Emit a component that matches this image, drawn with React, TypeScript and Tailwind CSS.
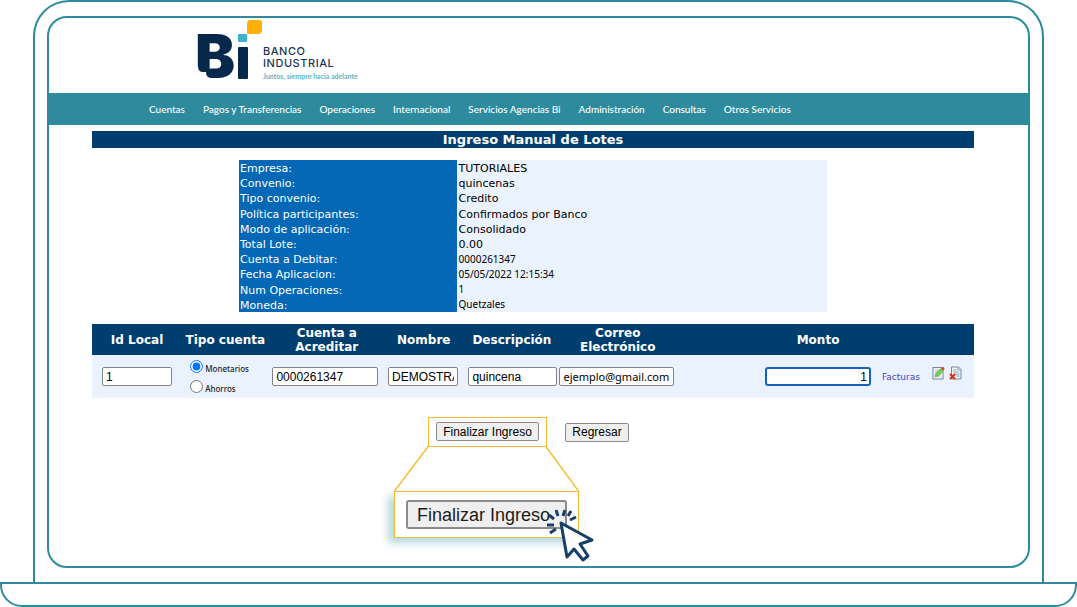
import type { ReactNode } from "react";

const navLinks = [
  "Cuentas",
  "Pagos y Transferencias",
  "Operaciones",
  "Internacional",
  "Servicios Agencias Bi",
  "Administración",
  "Consultas",
  "Otros Servicios",
];

const batchInfo = [
  { label: "Empresa:", value: "TUTORIALES" },
  { label: "Convenio:", value: "quincenas" },
  { label: "Tipo convenio:", value: "Credito" },
  { label: "Política participantes:", value: "Confirmados por Banco" },
  { label: "Modo de aplicación:", value: "Consolidado" },
  { label: "Total Lote:", value: "0.00" },
  { label: "Cuenta a Debitar:", value: "0000261347", small: true },
  { label: "Fecha Aplicacion:", value: "05/05/2022 12:15:34", small: true },
  { label: "Num Operaciones:", value: "1", small: true },
  { label: "Moneda:", value: "Quetzales", small: true },
];

const inputClass =
  "block h-[19px] w-full min-w-0 rounded-[2px] border border-[#858585] bg-white px-[3px] leading-4 text-black";

function Logo() {
  return (
    <div className="flex">
      <svg viewBox="0 0 68 73" className="h-[73px] w-[68px] shrink-0" role="img" aria-label="Bi">
        <text x="0" y="58" fill="#06294b" className="font-['Inter'] text-[60px] font-black">
          B
        </text>
        <path d="M0 46h3q0 6 5 6h3q0 6 6 6v2H0z" fill="#fff" />
        <rect x="43" y="27" width="10" height="32" rx="1" fill="#06294b" />
        <rect x="43" y="14" width="9" height="8" rx="1" fill="#3db3cb" />
        <path d="M55 0h10q2 0 2 2v8q0 4-4 4h-11V4q0-4 3-4z" fill="#fdb005" />
      </svg>
      <div className="flex flex-col pt-[25px] text-[#1b3551]">
        <span className="font-['Inter',sans-serif] text-[11px] leading-3 font-medium tracking-wider">BANCO</span>
        <span className="font-['Inter',sans-serif] text-[11px] leading-3 font-medium tracking-wider">INDUSTRIAL</span>
        <span className="mt-[3px] font-['Lato',sans-serif] text-[7px] leading-[9px] font-bold text-[#5bb5c9]">
          Juntos, siempre hacia adelante
        </span>
      </div>
    </div>
  );
}

function HeadCell({ children, span }: { children: ReactNode; span?: number }) {
  return (
    <th colSpan={span} scope="col" className={`h-[31px] text-center font-bold ${span ? "py-0 pr-3 pl-0" : "py-0 pr-0 pl-[2px]"}`}>
      {children}
    </th>
  );
}

function AccountType({ label, checked }: { label: string; checked?: boolean }) {
  return (
    <label className="flex items-center gap-[2px] text-[8px] leading-3 font-medium text-[#222]">
      <input type="radio" name="tipo" defaultChecked={checked} className="size-[13px] accent-[#0075ff]" />
      <span className="pt-1">{label}</span>
    </label>
  );
}

function EditIcon() {
  return (
    <svg viewBox="0 0 13 14" className="h-[14px] w-[13px]">
      <rect x="1" y="1.5" width="10" height="11.5" fill="#eef3f8" stroke="#7788a0" />
      <path d="M3 4h6M3 6h6M3 8h6M3 10h6" stroke="#b9c6d6" />
      <path d="M3 11l1-4L9 2.500l2.500 2L7 9.500z" fill="#74d048" stroke="#4fa73a" strokeWidth=".5" />
      <path d="M9 2.800L10.800 .8l1.900 1.700L11 4.500z" fill="#d8422f" />
    </svg>
  );
}

function DeleteIcon() {
  return (
    <svg viewBox="0 0 13 14" className="h-[14px] w-[13px]">
      <path d="M2.500 1h7l2.500 2.500V13H2.500z" fill="#eef3f8" stroke="#7788a0" />
      <path d="M9 1v3h3M4.500 4h3M4.500 6h5M6.500 8h4M7.500 10h3" fill="none" stroke="#8fa1ba" />
      <path d="M1 8l5 5M6 8l-5 5" stroke="#d92d16" strokeWidth="2" />
    </svg>
  );
}

function ClickCursor() {
  return (
    <svg viewBox="0 0 50 56" className="absolute top-[15px] left-[151px] h-14 w-[50px]" fill="none">
      <path
        d="M1 18h7M4 26l6-4M3 8l5 4M10 3l2 6M19 3l-2 6M25 4l-3 5M30 10l-6 3"
        stroke="#173f67"
        strokeWidth="3"
      />
      <path
        d="M15 16l6 34 7-8 9 11 5-4-8-12 12-4z"
        fill="#fff"
        stroke="#173f67"
        strokeWidth="3"
        strokeLinejoin="round"
      />
    </svg>
  );
}

function Magnifier() {
  return (
    <div className="absolute top-full left-[-35px] w-[185px]">
      <svg viewBox="0 0 185 45" className="block h-[45px] w-full" fill="none">
        <path d="M34.500 0L.5 45M151.500 0l33 45" stroke="#f5bd35" strokeWidth="1.500" />
      </svg>
      <div className="relative flex h-[47px] items-center border border-[#f5b92b] bg-white pl-[11px] shadow-[-6px_5px_8px_rgba(46,139,158,0.35)]">
        <button
          type="button"
          className="h-[29px] w-[161px] rounded-[3px] border-2 border-[#8b8b8b] bg-[#efefef] text-left pl-[9px] text-[18px] leading-6 whitespace-nowrap text-[#1c1c1c]"
        >
          Finalizar Ingreso
        </button>
        <ClickCursor />
      </div>
    </div>
  );
}

function BatchForm() {
  return (
    <table className="mt-3 w-full table-fixed border-collapse">
      <colgroup>
        <col className="w-[10%]" />
        <col className="w-[10%]" />
        <col className="w-[13%]" />
        <col className="w-[9%]" />
        <col className="w-[11%]" />
        <col className="w-[13%]" />
        <col className="w-[23%]" />
        <col />
      </colgroup>
      <thead>
        <tr className="bg-[#003e6f] text-[12px] leading-[14px] text-white">
          <HeadCell>Id Local</HeadCell>
          <HeadCell>Tipo cuenta</HeadCell>
          <HeadCell>
            Cuenta a<br />
            Acreditar
          </HeadCell>
          <HeadCell>Nombre</HeadCell>
          <HeadCell>Descripción</HeadCell>
          <HeadCell>
            Correo
            <br />
            Electrónico
          </HeadCell>
          <HeadCell span={2}>Monto</HeadCell>
        </tr>
      </thead>
      <tbody>
        <tr className="h-[43px] bg-[#eaf2fe] font-['Liberation_Sans',Arial,sans-serif] text-[12px]">
          <td className="py-0 pr-2 pl-[10px]">
            <input aria-label="Id Local" defaultValue="1" className={inputClass} />
          </td>
          <td className="py-0 pr-0 pl-[10px] font-['Noto_Sans',sans-serif]">
            <div className="flex flex-col gap-1">
              <AccountType label="Monetarios" checked />
              <AccountType label="Ahorros" />
            </div>
          </td>
          <td className="py-0 pr-[5px] pl-1">
            <input aria-label="Cuenta a Acreditar" defaultValue="0000261347" className={inputClass} />
          </td>
          <td className="py-0 pr-1 pl-[5px]">
            <input aria-label="Nombre" defaultValue="DEMOSTRACION" className={inputClass} />
          </td>
          <td className="py-0 pr-[2px] pl-[6px]">
            <input aria-label="Descripción" defaultValue="quincena" className={inputClass} />
          </td>
          <td className="p-0 font-['Noto_Sans',sans-serif] text-[11px]">
            <input aria-label="Correo Electrónico" defaultValue="ejemplo@gmail.com" className={inputClass} />
          </td>
          <td className="py-0 pr-[6px] pl-0">
            <input
              aria-label="Monto"
              defaultValue="1"
              className="ml-auto block h-[19px] w-[106px] rounded-[3px] border-2 border-[#1861bd] bg-white px-[2px] text-right leading-4 text-black"
            />
          </td>
          <td className="px-0 pt-0 pb-1">
            <div className="flex items-start gap-1 pl-[5px]">
              <a href="#facturas" className="mr-2 pt-[5px] font-['DejaVu_Sans',sans-serif] text-[9px] leading-3 text-[#4a42c4]">
                Facturas
              </a>
              <button type="button" aria-label="Editar">
                <EditIcon />
              </button>
              <button type="button" aria-label="Eliminar">
                <DeleteIcon />
              </button>
            </div>
          </td>
        </tr>
      </tbody>
    </table>
  );
}

export default function App() {
  return (
    <div className="w-full bg-white">
      <div className="mx-[33px] rounded-t-[36px] border-2 border-b-0 border-[#2e8b9e] px-3 pt-[14px] pb-[14px]">
        <div className="min-h-[552px] rounded-[20px] border-2 border-[#2e8b9e]">
          <header className="h-[75px] pt-[2px] pl-[146px]">
            <Logo />
          </header>
          <nav className="flex h-8 items-center gap-[18px] bg-[#2e8b9e] pl-[100px] font-['Lato',sans-serif] text-[10px] font-medium whitespace-nowrap text-white">
            {navLinks.map((link) => (
              <a key={link} href="#menu">
                {link}
              </a>
            ))}
          </nav>

          <main className="pt-[6px] pr-[54px] pl-[43px] font-['DejaVu_Sans',Verdana,sans-serif]">
            <h1 className="bg-[#003e6f] text-center text-[13px] leading-[17px] font-bold text-white">
              Ingreso Manual de Lotes
            </h1>

            <table className="mx-auto mt-3 h-[152px] w-2/3 border-collapse text-[11px] leading-[13px]">
              <tbody>
                {batchInfo.map((row) => (
                  <tr key={row.label}>
                    <th scope="row" className="w-[37%] bg-[#0468b7] p-0 pt-[2px] pl-px text-left font-normal text-white">
                      {row.label}
                    </th>
                    <td
                      className={`bg-[#eaf2fe] p-0 pl-[2px] text-black ${row.small ? "pt-px font-['Noto_Sans',sans-serif] text-[10px]" : "pt-[2px]"}`}
                    >
                      {row.value}
                    </td>
                  </tr>
                ))}
              </tbody>
            </table>

            <BatchForm />

            <div className="mt-[19px] flex items-center justify-center gap-[18px] pr-[9px] font-['Liberation_Sans',Arial,sans-serif] text-[12px] text-black">
              <div className="relative border border-[#f5b92b] px-[7px] pt-1 pb-[5px]">
                <button type="button" className="block h-[19px] w-[103px] rounded-[2px] border border-[#8b8b8b] bg-[#efefef] leading-4">
                  Finalizar Ingreso
                </button>
                <Magnifier />
              </div>
              <button type="button" className="block h-[19px] w-16 rounded-[2px] border border-[#8b8b8b] bg-[#efefef] leading-4">
                Regresar
              </button>
            </div>
          </main>
        </div>
      </div>
      <div className="h-[25px] rounded-b-[22px] border-2 border-[#2e8b9e]" />
    </div>
  );
}
